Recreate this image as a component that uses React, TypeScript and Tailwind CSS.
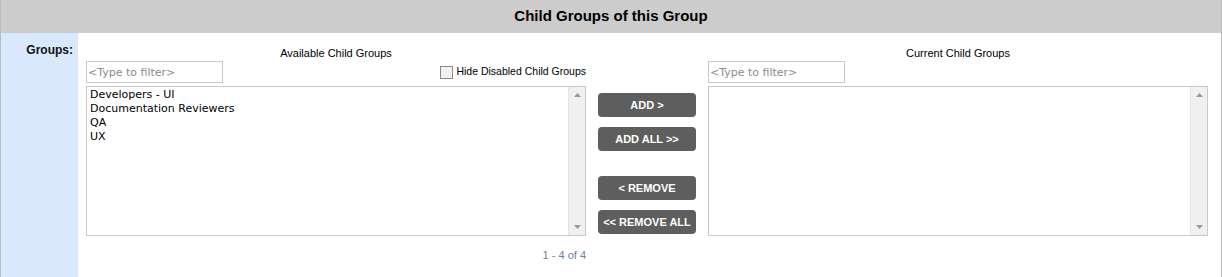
import React, { useMemo, useState } from "react";

const available = ["Developers - UI", "Documentation Reviewers", "QA", "UX"];

const ScrollBar = () => (
  <div className="flex w-[17px] shrink-0 flex-col items-center justify-between border-l border-[#e3e3e3] bg-[#f0f0f0] py-[6px]">
    <svg width="7" height="4" viewBox="0 0 7 4">
      <path d="M0 4 L3.5 0 L7 4 Z" fill="#9a9a9a" />
    </svg>
    <svg width="7" height="4" viewBox="0 0 7 4">
      <path d="M0 0 L3.5 4 L7 0 Z" fill="#9a9a9a" />
    </svg>
  </div>
);

const FilterInput = () => (
  <input
    placeholder="<Type to filter>"
    className="h-[22px] w-[137px] border border-[#c9c9c9] bg-white px-[1px] text-[11px] text-black placeholder:text-[#8c8c8c] outline-none"
    style={{ fontFamily: "Tahoma, 'DejaVu Sans', sans-serif" }}
  />
);

const ListBox = ({ items }: { items: string[] }) => (
  <div className="flex h-[150px] border border-[#c9c9c9] bg-white">
    <ul
      className="flex-1 pl-[3px] pt-[1px] text-[11px] leading-[14px] text-black"
      style={{ fontFamily: "Tahoma, 'DejaVu Sans', sans-serif" }}
    >
      {items.map((item) => (
        <li key={item}>{item}</li>
      ))}
    </ul>
    <ScrollBar />
  </div>
);

const ActionButton = ({ label }: { label: string }) => (
  <button className="block h-[24px] w-[98px] rounded-[4px] bg-[#5e5e5e] text-[11px] font-bold text-white">
    {label}
  </button>
);

export default function App() {
  const [hideDisabled, setHideDisabled] = useState(false);
  const count = useMemo(() => available.length, []);

  return (
    <div
      className="h-[277px] w-[1222px] border-x border-[#bcbcbc] bg-white"
      style={{ fontFamily: "'Liberation Sans', Arial, sans-serif" }}
    >
      {/* HEADER */}
      <div className="flex h-[33px] items-center justify-center bg-[#cccccc] text-[15px] font-bold text-black">
        Child Groups of this Group
      </div>

      <div className="flex h-[244px]">
        {/* LABEL */}
        <div className="w-[77px] shrink-0 bg-[#d9e8fc] pr-[5px] pt-[8px] text-right text-[12px] font-bold text-[#111]">
          Groups:
        </div>

        {/* CONTENT */}
        <div className="flex flex-col pl-[8px] pt-[13px]">
          <div className="flex gap-[12px]">
            {/* AVAILABLE */}
            <div className="flex w-[500px] flex-col">
              <div className="h-[15px] text-center text-[11px] leading-[15px] text-black">
                Available Child Groups
              </div>
              <div className="flex items-center justify-between">
                <FilterInput />
                <label className="flex items-center gap-[3px] text-[10.5px] text-black">
                  <input
                    type="checkbox"
                    checked={hideDisabled}
                    onChange={() => setHideDisabled(!hideDisabled)}
                    className="m-0 h-[13px] w-[13px] appearance-none border border-[#8a8a8a] bg-[#f2f2f2]"
                  />
                  Hide Disabled Child Groups
                </label>
              </div>
              <div className="mt-[3px]">
                <ListBox items={available} />
              </div>
              <div className="mt-[11px] text-right text-[11px] text-[#6b7e9b]">
                1 - {count} of {count}
              </div>
            </div>

            {/* BUTTONS */}
            <div className="flex w-[98px] flex-col gap-[10px] pt-[47px]">
              <ActionButton label="ADD >" />
              <ActionButton label="ADD ALL >>" />
              <div className="mt-[15px]">
                <ActionButton label="< REMOVE" />
              </div>
              <ActionButton label="<< REMOVE ALL" />
            </div>

            {/* CURRENT */}
            <div className="flex w-[500px] flex-col">
              <div className="h-[15px] text-center text-[11px] leading-[15px] text-black">
                Current Child Groups
              </div>
              <div className="flex items-center">
                <FilterInput />
              </div>
              <div className="mt-[3px]">
                <ListBox items={[]} />
              </div>
            </div>
          </div>
        </div>
      </div>
    </div>
  );
}
